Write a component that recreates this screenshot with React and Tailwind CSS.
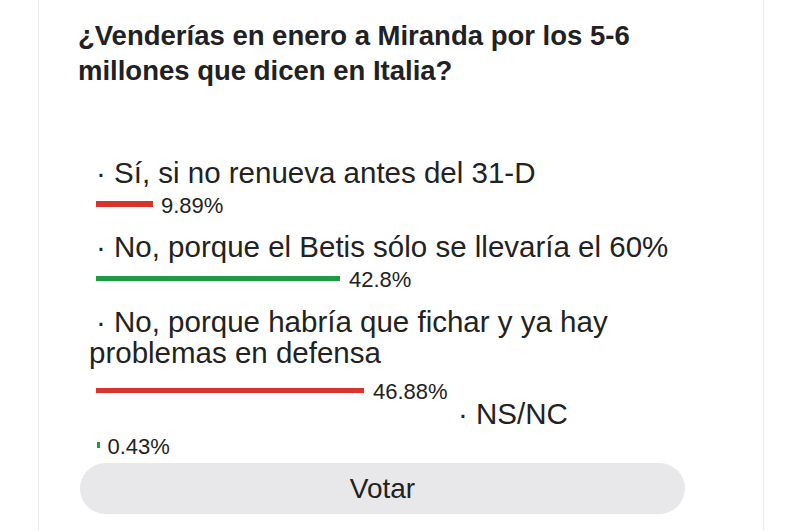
export default function App() {
  const font = { fontFamily: '"Liberation Sans", Arial, sans-serif' };
  const Bar = ({ w, color, h = "h-[5px]", mt = "mt-[7px]" }) => (
    <div className={`${h} ${mt} ${color} shrink-0`} style={{ width: w }} />
  );
  return (
    <div className="w-[800px] h-[531px] bg-white overflow-hidden" style={font}>
      <div className="ml-[38px] w-[726px] h-[531px] border-x border-[#ececec] pl-[39px] text-[#222]">
        <h1 className="pt-[18px] w-[600px] text-[27.5px] leading-[35px] font-bold text-[#1f2124]">
          ¿Venderías en enero a Miranda por los 5-6 millones que dicen en Italia?
        </h1>

        <div className="pl-[11px] w-[607px]">
          {/* Option 1 */}
          <div className="mt-[69px] text-[29.5px] leading-[31px] indent-[7px]">· Sí, si no renueva antes del 31-D</div>
          <div className="mt-[6px] h-[24px] flex items-start pl-[7px]">
            <Bar w={57} color="bg-[#d9342b]" h="h-[6px]" />
            <span className="ml-[8px] text-[22px] leading-[24px]">9.89%</span>
          </div>

          {/* Option 2 */}
          <div className="mt-[13px] text-[29.5px] leading-[31px] indent-[7px]">· No, porque el Betis sólo se llevaría el 60%</div>
          <div className="mt-[6px] h-[24px] flex items-start pl-[7px]">
            <Bar w={244} color="bg-[#1e9b45]" mt="mt-[8px]" />
            <span className="ml-[9px] text-[22px] leading-[24px]">42.8%</span>
          </div>

          {/* Option 3 */}
          <div className="mt-[14px] text-[29.5px] leading-[31px] indent-[7px]">· No, porque habría que fichar y ya hay problemas en defensa</div>
          <div className="mt-[12px] h-[24px] flex items-start pl-[7px]">
            <Bar w={268} color="bg-[#d9342b]" mt="mt-[8px]" />
            <span className="ml-[9px] text-[22px] leading-[24px]">46.88%</span>
          </div>

          {/* Option 4 */}
          <div className="-mt-[6px] ml-[362px] text-[29.5px] leading-[31px] indent-[7px]">· NS/NC</div>
          <div className="mt-[6px] h-[24px] flex items-start pl-[8px]">
            <Bar w={2.5} color="bg-[#1e9b45]" h="h-[6px]" />
            <span className="ml-[8px] text-[22px] leading-[24px]">0.43%</span>
          </div>
        </div>

        <button className="mt-[4px] ml-[2px] w-[605px] h-[51px] rounded-full bg-[#e8e8ea] text-[28px] text-[#222] flex items-center justify-center">
          Votar
        </button>
      </div>
    </div>
  );
}
